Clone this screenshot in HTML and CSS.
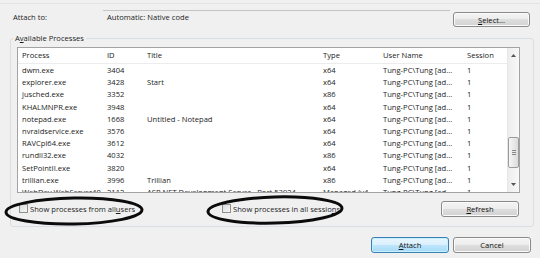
FILE: index.html
```html
<!DOCTYPE html>
<html lang="en">
<head>
  <meta charset="UTF-8" />
  <title>Attach to Process</title>
  <link rel="stylesheet" href="styles.css">
</head>
<body>
  <div class="attach-row">
    <div class="label">Attach to:</div>
    <div class="field">Automatic: Native code</div>
    <button class="btn select-btn"><u>S</u>elect...</button>
  </div>

  <fieldset class="group">
    <legend>A<u>v</u>ailable Processes</legend>

    <div class="list">
      <div class="table">
        <div class="row head">
          <span>Process</span><span>ID</span><span>Title</span><span>Type</span><span>User Name</span><span>Session</span>
        </div>
        <div class="row"><span>dwm.exe</span><span>3404</span><span></span><span>x64</span><span>Tung-PC\Tung [ad...</span><span>1</span></div>
        <div class="row"><span>explorer.exe</span><span>3428</span><span>Start</span><span>x64</span><span>Tung-PC\Tung [ad...</span><span>1</span></div>
        <div class="row"><span>jusched.exe</span><span>3352</span><span></span><span>x86</span><span>Tung-PC\Tung [ad...</span><span>1</span></div>
        <div class="row"><span>KHALMNPR.exe</span><span>3948</span><span></span><span>x64</span><span>Tung-PC\Tung [ad...</span><span>1</span></div>
        <div class="row"><span>notepad.exe</span><span>1668</span><span>Untitled - Notepad</span><span>x64</span><span>Tung-PC\Tung [ad...</span><span>1</span></div>
        <div class="row"><span>nvraidservice.exe</span><span>3576</span><span></span><span>x64</span><span>Tung-PC\Tung [ad...</span><span>1</span></div>
        <div class="row"><span>RAVCpl64.exe</span><span>3612</span><span></span><span>x64</span><span>Tung-PC\Tung [ad...</span><span>1</span></div>
        <div class="row"><span>rundll32.exe</span><span>4032</span><span></span><span>x86</span><span>Tung-PC\Tung [ad...</span><span>1</span></div>
        <div class="row"><span>SetPointII.exe</span><span>3820</span><span></span><span>x64</span><span>Tung-PC\Tung [ad...</span><span>1</span></div>
        <div class="row"><span>trillian.exe</span><span>3996</span><span>Trillian</span><span>x86</span><span>Tung-PC\Tung [ad...</span><span>1</span></div>
        <div class="row"><span>WebDev.WebServer40.exe</span><span>2112</span><span>ASP.NET Development Server - Port 53924</span><span>Managed (v4...</span><span>Tung-PC\Tung [ad...</span><span>1</span></div>
      </div>
      <div class="scrollbar">
        <div class="arrow up"><svg width="5" height="3" viewBox="0 0 5 3"><polygon points="0,3 2.5,0 5,3" fill="#555"/></svg></div>
        <div class="track">
          <div class="thumb"><div class="grip"></div></div>
        </div>
        <div class="arrow down"><svg width="5" height="3" viewBox="0 0 5 3"><polygon points="0,0 2.5,3 5,0" fill="#555"/></svg></div>
      </div>
    </div>

    <div class="options">
      <label class="check"><span class="box"></span>Show processes from all <u>u</u>sers</label>
      <label class="check"><span class="box"></span>Show processes in all sessio<u>n</u>s</label>
      <button class="btn refresh-btn"><u>R</u>efresh</button>
    </div>
  </fieldset>

  <div class="footer">
    <button class="btn default-btn"><u>A</u>ttach</button>
    <button class="btn">Cancel</button>
  </div>

  <!-- hand drawn marks around the two checkboxes -->
  <svg class="marks" width="540" height="258" viewBox="0 0 540 258">
    <ellipse cx="74" cy="211" rx="68" ry="13" transform="rotate(-1 74 211)" />
    <ellipse cx="275" cy="210" rx="67" ry="13" transform="rotate(-1.5 275 210)" />
  </svg>
</body>
</html>
```

FILE: styles.css
```css
body {
  margin: 0;
  width: 540px;
  height: 258px;
  overflow: hidden;
  position: relative;
  background-color: #f0f0f0;
  font-family: "Open Sans", "Noto Sans", sans-serif;
  font-size: 7.6px;
  color: #1c1c1c;
}
u {
  text-decoration-thickness: 1px;
  text-underline-offset: 1px;
}
.attach-row {
  display: flex;
  align-items: flex-start;
  margin-top: 3px;
  border-top: 1px solid #e4e4e4;
  padding: 6px 10px 0 13px;
}
.label {
  width: 90px;
  margin-top: 2px;
  line-height: 10px;
}
.field {
  flex: 1;
  margin-right: 3px;
  border-top: 1px solid #c4c4c4;
  padding: 1px 4px;
  line-height: 10px;
}
.btn {
  font-family: inherit;
  font-size: inherit;
  color: #111;
  height: 16px;
  width: 78px;
  padding: 0;
  border: 1px solid #8a8a8a;
  border-radius: 3px;
  background: linear-gradient(#f4f4f4 0%, #ececec 50%, #dedede 50%, #d2d2d2 100%);
  box-shadow: inset 0 0 0 1px #fbfbfb;
}
.select-btn {
  width: 77px;
  height: 15px;
  margin-top: 2px;
}
.group {
  margin: 6px 7px 0 10px;
  padding: 4px 13px 9px 6px;
  border: 1px solid #d8dee3;
  border-radius: 3px;
}
.group legend {
  margin-left: -4px;
  padding: 0 2px;
  line-height: 10px;
}
.list {
  height: 144px;
  border: 1px solid #a3a3a3;
  background: #fff;
  display: flex;
  overflow: hidden;
}
.table {
  flex: 1;
  overflow: hidden;
}
.row {
  display: grid;
  grid-template-columns: 85px 40px 176px 60px 84px 44px;
  height: 12.2px;
  line-height: 12.2px;
  white-space: nowrap;
}
.row span {
  padding-left: 4px;
  overflow: hidden;
}
.row.head {
  height: 14px;
  line-height: 15px;
  margin-top: 0;
  padding-bottom: 1px;
  border-bottom: 1px solid #ececec;
  color: #222;
}
.scrollbar {
  width: 11px;
  display: flex;
  flex-direction: column;
  border-left: 1px solid #e6e6e6;
  background: linear-gradient(to right, #ededed, #f8f8f8);
}
.arrow {
  height: 15px;
  display: flex;
  align-items: center;
  justify-content: center;
}
.track {
  flex: 1;
}
.thumb {
  margin: 74px 0 0 0;
  height: 29px;
  border: 1px solid #9c9c9c;
  border-radius: 2px;
  background: linear-gradient(to right, #f6f6f6, #dcdcdc);
  display: flex;
  align-items: center;
  justify-content: center;
}
.grip {
  width: 4px;
  height: 5px;
  background: repeating-linear-gradient(#888 0 1px, transparent 1px 2px);
}
.options {
  display: flex;
  align-items: center;
  margin-top: 7px;
  height: 17px;
}
.check {
  display: flex;
  align-items: center;
  width: 203px;
  margin-left: 2px;
}
.check + .check {
  margin-left: 0;
}
.box {
  width: 7px;
  height: 7px;
  margin-right: 2px;
  border: 1px solid #8e8f8f;
  background: linear-gradient(135deg, #dcdcdc, #f6f6f6);
}
.refresh-btn {
  margin-left: auto;
  margin-right: 1px;
}
.footer {
  display: flex;
  justify-content: flex-end;
  gap: 4px;
  margin-top: 10px;
  padding-right: 9px;
}
.default-btn {
  border-color: #3c7fb1;
  background: linear-gradient(#eaf6fd 0%, #d9f0fc 50%, #bee6fd 50%, #a7d9f5 100%);
  box-shadow: inset 0 0 0 1px #c4f1ff;
}
.marks {
  position: absolute;
  left: 0;
  top: 0;
  pointer-events: none;
}
.marks ellipse {
  fill: none;
  stroke: #0b0b0b;
  stroke-width: 3;
}
```
